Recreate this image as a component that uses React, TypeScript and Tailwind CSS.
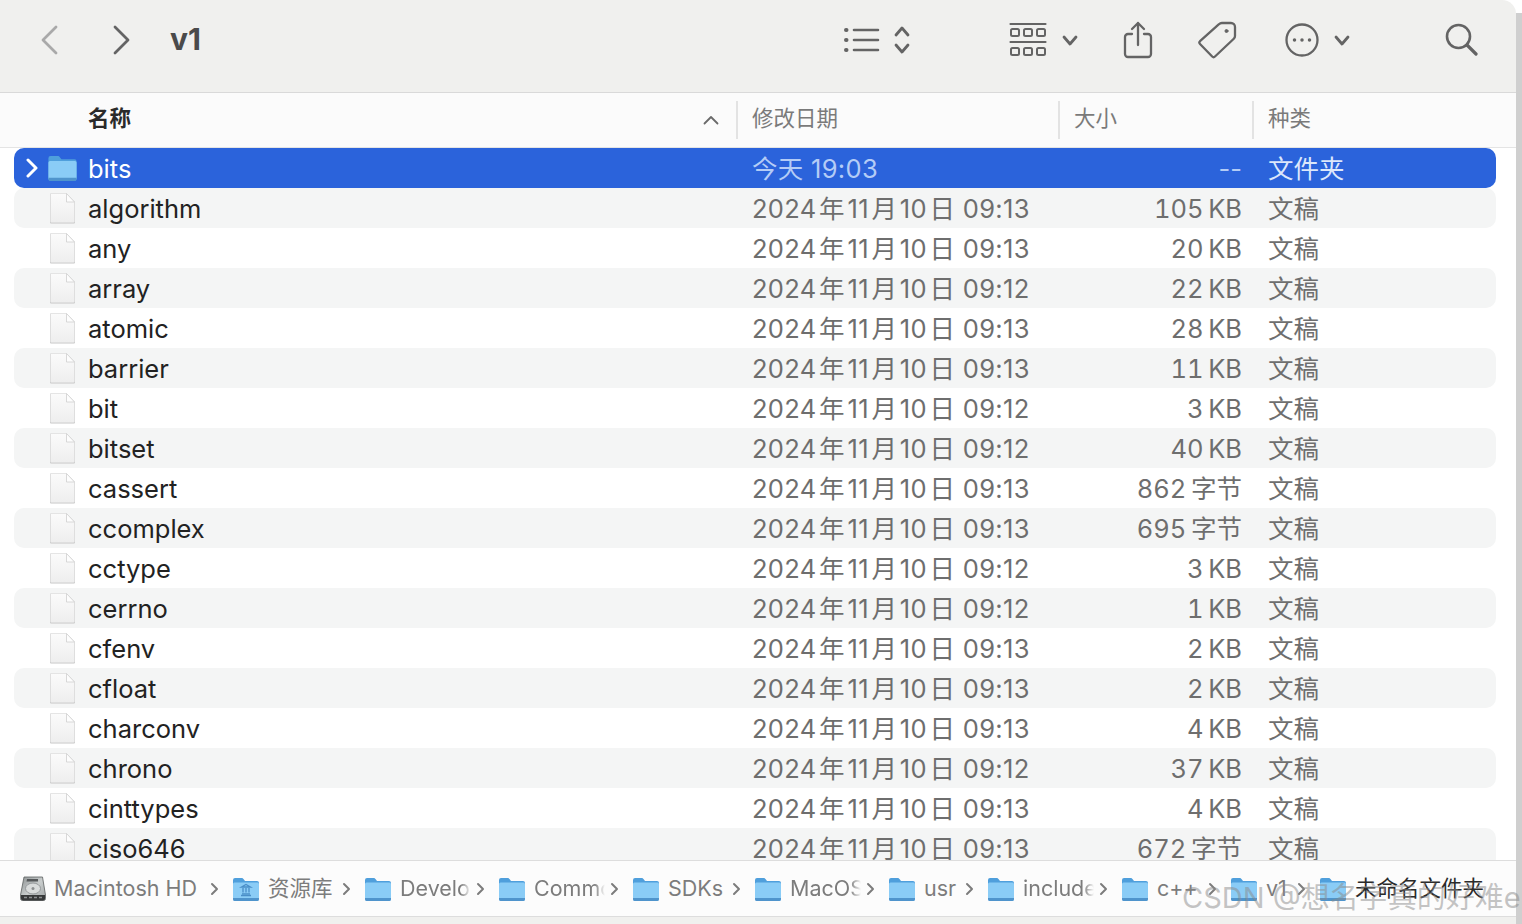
import { ReactNode } from 'react';

const cjk = 'font-["Inter","Noto_Sans_CJK_SC",sans-serif]';

const files = [
  { name: 'bits', date: '今天 19:03', size: '--', kind: '文件夹' },
  { name: 'algorithm', date: '2024年11月10日 09:13', size: '105 KB', kind: '文稿' },
  { name: 'any', date: '2024年11月10日 09:13', size: '20 KB', kind: '文稿' },
  { name: 'array', date: '2024年11月10日 09:12', size: '22 KB', kind: '文稿' },
  { name: 'atomic', date: '2024年11月10日 09:13', size: '28 KB', kind: '文稿' },
  { name: 'barrier', date: '2024年11月10日 09:13', size: '11 KB', kind: '文稿' },
  { name: 'bit', date: '2024年11月10日 09:12', size: '3 KB', kind: '文稿' },
  { name: 'bitset', date: '2024年11月10日 09:12', size: '40 KB', kind: '文稿' },
  { name: 'cassert', date: '2024年11月10日 09:13', size: '862 字节', kind: '文稿' },
  { name: 'ccomplex', date: '2024年11月10日 09:13', size: '695 字节', kind: '文稿' },
  { name: 'cctype', date: '2024年11月10日 09:12', size: '3 KB', kind: '文稿' },
  { name: 'cerrno', date: '2024年11月10日 09:12', size: '1 KB', kind: '文稿' },
  { name: 'cfenv', date: '2024年11月10日 09:13', size: '2 KB', kind: '文稿' },
  { name: 'cfloat', date: '2024年11月10日 09:13', size: '2 KB', kind: '文稿' },
  { name: 'charconv', date: '2024年11月10日 09:13', size: '4 KB', kind: '文稿' },
  { name: 'chrono', date: '2024年11月10日 09:12', size: '37 KB', kind: '文稿' },
  { name: 'cinttypes', date: '2024年11月10日 09:13', size: '4 KB', kind: '文稿' },
  { name: 'ciso646', date: '2024年11月10日 09:13', size: '672 字节', kind: '文稿' },
];

const crumbs = [
  { label: '资源库', w: 'w-[66px]', lib: true },
  { label: 'Develo', w: 'w-[71px]', fade: true },
  { label: 'Common', w: 'w-[71px]', fade: true },
  { label: 'SDKs', w: 'w-[56px]' },
  { label: 'MacOS', w: 'w-[71px]', fade: true },
  { label: 'usr', w: 'w-[33px]' },
  { label: 'include', w: 'w-[71px]', fade: true },
  { label: 'c++', w: 'w-[43px]' },
  { label: 'v1', w: 'w-[23px]' },
  { label: '未命名文件夹', w: 'w-[132px]', last: true },
];

// macOS puts a small gap between latin digits and cjk glyphs
const spaced = (s: string) => s.replace(/年/, '\u200a年\u200a').replace(/月/, '\u200a月\u200a').replace(/日/, '\u200a日');
const narrow = (s: string) => s.replace(' ', '\u2009');

function Stroke({ w, h, children, className = '' }: { w: number; h: number; children: ReactNode; className?: string }) {
  return (
    <svg width={w} height={h} viewBox={`0 0 ${w} ${h}`} fill="none" stroke="currentColor" strokeLinecap="round" strokeLinejoin="round" className={className}>
      {children}
    </svg>
  );
}

function FileIcon() {
  return (
    <svg width="27" height="31" viewBox="0 0 27 31" className="shrink-0">
      <defs>
        <linearGradient id="sheet" x1="0" y1="0" x2="0" y2="1">
          <stop offset="0" stopColor="#fbfbfb" />
          <stop offset="1" stopColor="#eeeeee" />
        </linearGradient>
      </defs>
      <path d="M1 1h16.500L26 9.500V29.500a1 1 0 0 1-1 1H2a1 1 0 0 1-1-1z" fill="#c6c6c6" />
      <path d="M1.500 .5h16L25.500 9v19.500a1 1 0 0 1-1 1h-22a1 1 0 0 1-1-1z" fill="url(#sheet)" stroke="#dedede" strokeWidth=".8" />
      <path d="M17.500 .5V9h8z" fill="#fdfdfd" stroke="#cfcfcf" strokeWidth=".8" strokeLinejoin="round" />
    </svg>
  );
}

function Folder({ w = 26, h = 24, lib = false }: { w?: number; h?: number; lib?: boolean }) {
  return (
    <svg width={w} height={h} viewBox="0 0 26 24" className="shrink-0">
      <path d="M0 3a2 2 0 0 1 2-2h6.500c1 0 1.500.4 2.200 1.200L12 4h12a2 2 0 0 1 2 2v16a2 2 0 0 1-2 2H2a2 2 0 0 1-2-2z" fill="#4f9fdc" />
      <path d="M0 7a1.500 1.500 0 0 1 1.500-1.500h23A1.500 1.500 0 0 1 26 7v14.500a1.500 1.500 0 0 1-1.500 1.500h-23A1.500 1.500 0 0 1 0 21.500z" fill="#8accf6" />
      <path d="M0 21h26v1a2 2 0 0 1-2 2H2a2 2 0 0 1-2-2z" fill="#4f94cc" />
      {lib && (
        <path d="M8 18.500h10M9 16.800h8M10 15.500v-4.500M13 15.500v-4.500M16 15.500v-4.500M8.500 10L13 7.500l4.500 2.500z" stroke="#4a8ec8" strokeWidth="1.300" fill="none" />
      )}
    </svg>
  );
}

function DiskIcon() {
  return (
    <svg width="26" height="26" viewBox="0 0 26 26" className="shrink-0">
      <defs>
        <linearGradient id="plate" x1="0" y1="0" x2="1" y2="1">
          <stop offset="0" stopColor="#8e9394" />
          <stop offset=".5" stopColor="#c9cdcd" />
          <stop offset="1" stopColor="#9fa3a4" />
        </linearGradient>
      </defs>
      <path d="M4 1h18.500L25.500 19v3.500a2 2 0 0 1-2 2h-21a2 2 0 0 1-2-2V19z" fill="url(#plate)" stroke="#5c5f60" strokeWidth=".8" />
      <path d="M7 3h11v2.500H6.500z" fill="#55585a" />
      <ellipse cx="13" cy="12.500" rx="7.500" ry="5.500" fill="#d9dcdc" stroke="#94989a" strokeWidth="1" />
      <circle cx="13" cy="12.500" r="1.500" fill="#8c8f90" />
      <path d="M1 19h24v3.500a2 2 0 0 1-2 2H3a2 2 0 0 1-2-2z" fill="#37393a" />
      <path d="M4 21.500h3M9 21.500h3M14 21.500h3M19 21.500h3" stroke="#8d9091" strokeWidth="1.400" />
    </svg>
  );
}

function Toolbar() {
  return (
    <div className="flex h-[93px] shrink-0 items-center pb-[13px] bg-[#f0f0ee] border-b border-[#d9d9d9] text-[#646464]">
      <Stroke w={18} h={30} className="ml-[40px] text-[#a9a9a9]">
        <path d="M16 2L3 15l13 13" strokeWidth="2.800" />
      </Stroke>
      <Stroke w={18} h={30} className="ml-[55px] text-[#646464]">
        <path d="M2 2l13 13L2 28" strokeWidth="2.800" />
      </Stroke>
      <span className={`ml-[39px] text-[30px] font-bold text-[#4a4a4a] font-["Inter",sans-serif]`}>v1</span>

      <Stroke w={36} h={28} className="ml-[643px]">
        <path d="M10 4h24M10 14h24M10 24h24" strokeWidth="2.600" />
        <path d="M2 4h.5M2 14h.5M2 24h.5" strokeWidth="4" />
      </Stroke>
      <Stroke w={18} h={32} className="ml-[13px]">
        <path d="M3 11l6-7 6 7M3 21l6 7 6-7" strokeWidth="2.800" />
      </Stroke>
      <Stroke w={38} h={36} className="ml-[98px]">
        <path d="M1.500 2h35M1.500 20h35" strokeWidth="2.200" />
        <rect x="2" y="7" width="8" height="7" rx="1.500" strokeWidth="2" />
        <rect x="15" y="7" width="8" height="7" rx="1.500" strokeWidth="2" />
        <rect x="28" y="7" width="8" height="7" rx="1.500" strokeWidth="2" />
        <rect x="2" y="26" width="8" height="7" rx="1.500" strokeWidth="2" />
        <rect x="15" y="26" width="8" height="7" rx="1.500" strokeWidth="2" />
        <rect x="28" y="26" width="8" height="7" rx="1.500" strokeWidth="2" />
      </Stroke>
      <Stroke w={16} h={12} className="ml-[15px] mt-[2px]">
        <path d="M2 2l6 7 6-7" strokeWidth="2.800" />
      </Stroke>
      <Stroke w={30} h={38} className="ml-[45px]">
        <path d="M9 13H5a3 3 0 0 0-3 3v17a3 3 0 0 0 3 3h20a3 3 0 0 0 3-3V16a3 3 0 0 0-3-3h-4" strokeWidth="2.300" />
        <path d="M15 24V2M9 8l6-6 6 6" strokeWidth="2.300" />
      </Stroke>
      <Stroke w={40} h={38} className="ml-[44px]">
        <path d="M25 2h9a4 4 0 0 1 4 4v9a4 4 0 0 1-1.200 2.800L18 35.500a2 2 0 0 1-2.800 0L3 23a2 2 0 0 1 0-2.800L22 3.200A4 4 0 0 1 25 2z" strokeWidth="2.300" />
        <circle cx="29.500" cy="10" r="1.500" fill="currentColor" strokeWidth="1" />
      </Stroke>
      <Stroke w={34} h={34} className="ml-[48px]">
        <circle cx="17" cy="17" r="15.500" strokeWidth="2.300" />
        <circle cx="9.500" cy="17" r="1" fill="currentColor" strokeWidth="1.500" />
        <circle cx="17" cy="17" r="1" fill="currentColor" strokeWidth="1.500" />
        <circle cx="24.500" cy="17" r="1" fill="currentColor" strokeWidth="1.500" />
      </Stroke>
      <Stroke w={16} h={12} className="ml-[15px] mt-[2px]">
        <path d="M2 2l6 7 6-7" strokeWidth="2.800" />
      </Stroke>
      <Stroke w={33} h={33} className="ml-[95px]">
        <circle cx="13.500" cy="13.500" r="11.500" strokeWidth="2.600" />
        <path d="M22 22l9 9" strokeWidth="3.200" />
      </Stroke>
    </div>
  );
}

function Header() {
  return (
    <div className={`flex h-[55px] shrink-0 items-center bg-[#fbfbfb] border-b border-[#e4e4e4] text-[21.500px] text-[#7a7a7a] ${cjk}`}>
      <span className="ml-[88px] mb-[3px] w-[44px] font-bold text-[#2b2b2b]">名称</span>
      <Stroke w={16} h={10} className="ml-[571px] text-[#6a6a6a]">
        <path d="M1.500 8.500L8 2l6.500 6.500" strokeWidth="1.800" />
      </Stroke>
      <div className="ml-[17px] w-[2px] h-[38px] bg-[#e3e3e3]" />
      <span className="ml-[14px] mb-[3px] w-[306px]">修改日期</span>
      <div className="w-[2px] h-[38px] bg-[#e3e3e3]" />
      <span className="ml-[14px] mb-[3px] w-[178px]">大小</span>
      <div className="w-[2px] h-[38px] bg-[#e3e3e3]" />
      <span className="ml-[14px] mb-[3px]">种类</span>
    </div>
  );
}

function Row({ file, index }: { file: (typeof files)[number]; index: number }) {
  const selected = index === 0;
  const rowBg = selected ? 'bg-[#2b63db]' : index % 2 === 1 ? 'bg-[#f4f5f5]' : 'bg-white';
  const muted = selected ? 'text-[#b4ccf6]' : 'text-[#6e6e6e]';
  return (
    <div className={`flex h-[40px] shrink-0 items-center rounded-[10px] text-[25.500px] leading-none ${rowBg}`}>
      <div className="w-[34px] flex justify-center pl-[2px]">
        {selected && (
          <Stroke w={12} h={20} className="text-white">
            <path d="M2 2l8 8-8 8" strokeWidth="3" />
          </Stroke>
        )}
      </div>
      <div className="w-[28px] flex justify-center">{selected ? <Folder w={29} h={26} /> : <FileIcon />}</div>
      <span className={`ml-[12px] w-[664px] pt-[2px] ${selected ? 'text-white' : 'text-[#222222]'}`}>{file.name}</span>
      <span className={`w-[300px] pt-[2px] whitespace-nowrap tracking-[0.3px] ${muted}`}>{spaced(file.date)}</span>
      <span className={`w-[190px] pt-[2px] whitespace-nowrap text-right ${selected ? '' : 'tabular-nums'} ${muted}`}>{narrow(file.size)}</span>
      <span className={`ml-[26px] pt-[2px] ${selected ? 'text-[#dce7fb]' : 'text-[#6e6e6e]'}`}>{file.kind}</span>
    </div>
  );
}

function PathBar() {
  return (
    <div className={`flex h-[57px] shrink-0 items-center bg-[#fcfcfc] border-t border-b border-[#dddddd] text-[21.500px] text-[#7c7c7c] ${cjk}`}>
      <div className="ml-[20px]">
        <DiskIcon />
      </div>
      <span className="ml-[8px] w-[147px] whitespace-nowrap">Macintosh HD</span>
      <Stroke w={9} h={14} className="ml-[9px] text-[#7c7c7c]">
        <path d="M2 2l5 5-5 5" strokeWidth="2" />
      </Stroke>
      {crumbs.map((c) => (
        <div key={c.label} className="flex items-center ml-[14px]">
          <Folder lib={c.lib} />
          <span className={`ml-[9px] overflow-hidden whitespace-nowrap ${c.w} ${c.fade ? '[mask-image:linear-gradient(to_right,black_85%,transparent)]' : ''} ${c.last ? 'text-[#2a2a2a]' : ''}`}>
            {c.label}
          </span>
          {!c.last && (
            <Stroke w={9} h={14} className={`${c.fade ? 'ml-[5px]' : 'ml-[8px]'} text-[#7c7c7c]`}>
              <path d="M2 2l5 5-5 5" strokeWidth="2" />
            </Stroke>
          )}
        </div>
      ))}
    </div>
  );
}

export default function App() {
  return (
    <div className={`relative flex w-[1522px] h-[924px] overflow-hidden bg-white ${cjk}`}>
      <div className="flex flex-col h-full w-[1516px] rounded-tr-[14px] overflow-hidden">
        <Toolbar />
        <Header />
        <div className="flex-1 min-h-0 overflow-hidden pl-[14px] pr-[20px] bg-white">
          <div className="flex flex-col">
            {files.map((f, i) => (
              <Row key={f.name} file={f} index={i} />
            ))}
          </div>
        </div>
        <PathBar />
        <div className="h-[7px] shrink-0 bg-[#f0f0ee]" />
      </div>
      <div className="flex-1 mt-[13px] bg-[#cfcfcf]" />
      {/* csdn watermark */}
      <div className="absolute left-[1182px] top-[879px] whitespace-nowrap text-[29px] leading-[38px] text-[#8a8a8a]/50">
        CSDN @想名字真的好难e
      </div>
    </div>
  );
}
